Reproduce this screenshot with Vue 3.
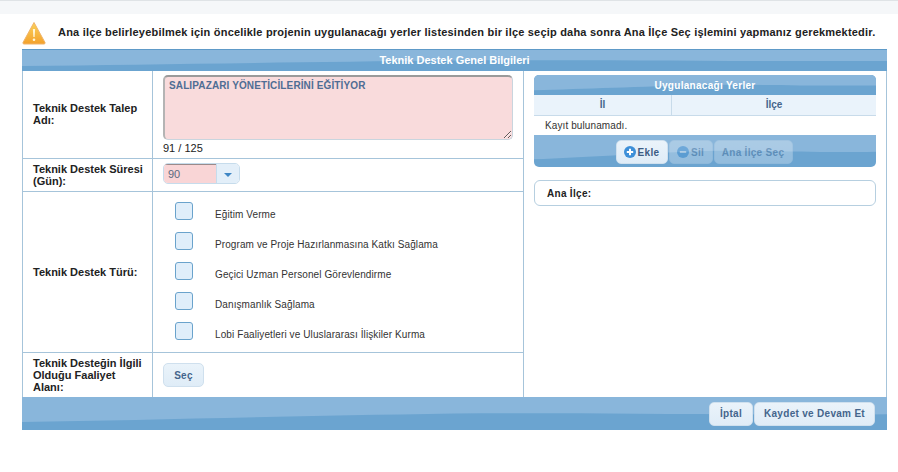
<template>
  <div class="page">
    <div class="top-strip"></div>
    <div class="message">
      <svg class="warn" width="24" height="24" viewBox="0 0 24 24">
        <defs>
          <linearGradient id="warnFill" x1="0" y1="0" x2="0" y2="1">
            <stop offset="0" stop-color="#fbd25a" />
            <stop offset="1" stop-color="#f3a12c" />
          </linearGradient>
        </defs>
        <path d="M12 1.5 L23 21.5 Q23.4 23 22 23 L2 23 Q.6 23 1 21.5 Z" fill="url(#warnFill)" stroke="#f0b46a" stroke-width="1" stroke-linejoin="round" />
        <path d="M10.9 8 L13.1 8 L12.6 16 L11.4 16 Z" fill="#fff6d8" />
        <circle cx="12" cy="18.8" r="1.3" fill="#fff6d8" />
      </svg>
      <span>Ana ilçe belirleyebilmek için öncelikle projenin uygulanacağı yerler listesinden bir ilçe seçip daha sonra Ana İlçe Seç işlemini yapmanız gerekmektedir.</span>
    </div>

    <div class="panel">
      <div class="bar title">Teknik Destek Genel Bilgileri</div>
      <div class="body">
        <div class="left">
          <div class="row row-name">
            <div class="label"><span>Teknik Destek Talep<br>Adı:</span></div>
            <div class="value name-value">
              <textarea class="area" readonly :value="talepAdi"></textarea>
              <div class="count">91 / 125</div>
            </div>
          </div>
          <div class="row row-time">
            <div class="label"><span>Teknik Destek Süresi<br>(Gün):</span></div>
            <div class="value">
              <div class="spinner">
                <span class="spin-input">90</span>
                <span class="spin-btn"><i class="caret"></i></span>
              </div>
            </div>
          </div>
          <div class="row row-type">
            <div class="label">Teknik Destek Türü:</div>
            <div class="value types">
              <div v-for="t in turler" :key="t" class="type">
                <span class="box"></span>
                <span class="type-text">{{ t }}</span>
              </div>
            </div>
          </div>
          <div class="row row-area">
            <div class="label"><span>Teknik Desteğin İlgili<br>Olduğu Faaliyet<br>Alanı:</span></div>
            <div class="value">
              <button class="btn sec">Seç</button>
            </div>
          </div>
        </div>

        <div class="right">
          <div class="places">
            <div class="bar places-title">Uygulanacağı Yerler</div>
            <div class="head">
              <div class="il">İl</div>
              <div class="ilce">İlçe</div>
            </div>
            <div class="empty">Kayıt bulunamadı.</div>
            <div class="bar places-foot">
              <button class="btn ekle">
                <svg width="12" height="12" viewBox="0 0 12 12">
                  <circle cx="6" cy="6" r="6" fill="#3d8fd8" />
                  <path d="M6 2.8v6.4M2.8 6h6.4" stroke="#fff" stroke-width="2" />
                </svg>
                Ekle
              </button>
              <button class="btn off">
                <svg width="12" height="12" viewBox="0 0 12 12">
                  <circle cx="6" cy="6" r="6" fill="#3d8fd8" />
                  <path d="M2.8 6h6.4" stroke="#fff" stroke-width="2" />
                </svg>
                Sil
              </button>
              <button class="btn off wide">Ana İlçe Seç</button>
            </div>
          </div>
          <div class="main-district">Ana İlçe:</div>
        </div>
      </div>
      <div class="bar foot">
        <button class="btn cancel">İptal</button>
        <button class="btn save">Kaydet ve Devam Et</button>
      </div>
    </div>
  </div>
</template>

<script setup>
const talepAdi = 'SALIPAZARI YÖNETİCİLERİNİ EĞİTİYOR'
const turler = [
  'Eğitim Verme',
  'Program ve Proje Hazırlanmasına Katkı Sağlama',
  'Geçici Uzman Personel Görevlendirme',
  'Danışmanlık Sağlama',
  'Lobi Faaliyetleri ve Uluslararası İlişkiler Kurma'
]
</script>

<style>
html, body {
  margin: 0;
  background: #fff;
}
</style>

<style scoped>
.page {
  width: 898px;
  height: 472px;
  overflow: hidden;
  font-family: "Liberation Sans", Arial, sans-serif;
  font-size: 11px;
  color: #222;
}

.top-strip {
  height: 13px;
  background: #f5f7f9;
  border-top: 1px solid #dfe3e6;
}

.message {
  display: flex;
  align-items: center;
  height: 35px;
  padding-left: 22px;
  font-weight: bold;
  letter-spacing: 0.2px;
  color: #222;
  white-space: nowrap;
}

.warn {
  flex-shrink: 0;
  margin: 3px 12px 0 0;
}

.panel {
  margin-left: 22px;
  width: 865px;
  box-sizing: border-box;
  border: 1px solid #a6c4da;
  border-top: 0;
}

/* swoosh of the header bars, light on top and darker under the wave */
.bar {
  background-color: #6ba4d0;
  background-image: url("data:image/svg+xml,%3Csvg xmlns='http://www.w3.org/2000/svg' viewBox='0 0 100 100' preserveAspectRatio='none'%3E%3Cpath d='M0 0H100V52C80 56 65 46 50 50C30 58 15 70 0 76Z' fill='%2389b6db'/%3E%3C/svg%3E");
  background-size: 100% 100%;
}

.title {
  height: 21px;
  margin: 0 -1px;
  box-sizing: content-box;
  border-top: 1px solid #5e9ac8;
  line-height: 21px;
  text-align: center;
  color: #fff;
  font-weight: bold;
}

.body {
  display: flex;
  height: 326px;
}

.left {
  width: 501px;
  box-sizing: border-box;
  border-right: 1px solid #a6c4da;
}

.row {
  display: flex;
  box-sizing: border-box;
  border-bottom: 1px solid #a6c4da;
}

.row-name { height: 88px; }
.row-time { height: 33px; }
.row-type { height: 161px; }
.row-area { height: 44px; border-bottom: 0; }

.label {
  width: 130px;
  box-sizing: border-box;
  flex-shrink: 0;
  display: flex;
  align-items: center;
  padding-left: 10px;
  border-right: 1px solid #a6c4da;
  font-weight: bold;
  line-height: 12px;
  white-space: nowrap;
  color: #222;
}

.row-name .label {
  padding-bottom: 2px;
}

.value {
  flex: 1;
  display: flex;
  align-items: center;
  padding-left: 10px;
}

.name-value {
  flex-direction: column;
  align-items: flex-start;
  padding-top: 4px;
}

.area {
  display: block;
  width: 350px;
  height: 65px;
  box-sizing: border-box;
  margin: 0;
  padding: 3px 4px;
  background: #f9dbdc;
  border: 1px solid #c9d5de;
  border-top: 2px solid #9a9a9a;
  border-left: 2px solid #b4b4b4;
  border-radius: 5px;
  font-family: inherit;
  font-size: 10px;
  font-weight: bold;
  letter-spacing: 0.12px;
  color: #4f6d94;
  outline: 0;
}

.count {
  margin-top: 2px;
  font-size: 11px;
}

.spinner {
  display: flex;
  width: 77px;
  height: 21px;
  margin-bottom: 3px;
  box-sizing: border-box;
  border: 1px solid #c6dcec;
  border-radius: 5px;
  overflow: hidden;
}

.spin-input {
  width: 52px;
  box-sizing: border-box;
  padding-left: 4px;
  line-height: 19px;
  background: #f9d5d6;
  border-top: 1px solid #9a8a8a;
  color: #5c6a80;
}

.spin-btn {
  flex: 1;
  display: flex;
  align-items: center;
  justify-content: center;
  background: #e3eff9;
  border-left: 1px solid #c6dcec;
}

.caret {
  margin-top: 2px;
  border: 4px solid transparent;
  border-top: 4px solid #3f86c4;
  border-bottom: 0;
}

.types {
  flex-direction: column;
  align-items: stretch;
  padding: 10px 0 0 22px;
  gap: 12px;
}

.type {
  display: flex;
  align-items: center;
  height: 18px;
  gap: 22px;
  font-size: 10px;
  letter-spacing: 0.1px;
  color: #333;
}

.type-text {
  padding-top: 6px;
}

.box {
  width: 16px;
  height: 16px;
  border: 1px solid #6aa3cc;
  border-radius: 3px;
  background: #e0eefa;
}

.btn {
  height: 24px;
  box-sizing: border-box;
  padding: 0;
  display: inline-flex;
  align-items: center;
  justify-content: center;
  gap: 2px;
  border: 1px solid #cfe0ee;
  border-radius: 5px;
  background: linear-gradient(#eaf3fa, #dfecf7);
  font-family: inherit;
  font-size: 10px;
  font-weight: bold;
  letter-spacing: 0.3px;
  color: #44658c;
}

.sec {
  width: 41px;
}

.right {
  flex: 1;
  padding: 4px 10px 0;
}

.places {
  border-radius: 5px;
  overflow: hidden;
}

.places-title {
  height: 20px;
  line-height: 21px;
  text-align: center;
  color: #fff;
  font-size: 10px;
  font-weight: bold;
  letter-spacing: 0.3px;
}

.head {
  display: flex;
  height: 20px;
  line-height: 20px;
  text-align: center;
  font-size: 10px;
  font-weight: bold;
  color: #44658c;
  background: #eaf3fb;
  border-bottom: 1px solid #c8dbea;
}

.il {
  width: 137px;
  border-right: 1px solid #c8dbea;
}

.ilce {
  flex: 1;
}

.empty {
  height: 19px;
  line-height: 19px;
  padding-left: 11px;
  font-size: 10px;
  letter-spacing: 0.1px;
  background: #fff;
  color: #333;
}

.places-foot {
  display: flex;
  justify-content: center;
  gap: 1px;
  height: 32px;
  box-sizing: border-box;
  padding: 5px 2px 0 0;
}

.ekle {
  width: 52px;
  color: #3c5c84;
}

.off {
  width: 44px;
  opacity: 0.35;
}

.wide {
  width: 79px;
}

.main-district {
  margin-top: 13px;
  height: 26px;
  box-sizing: border-box;
  padding-left: 12px;
  line-height: 25px;
  border: 1px solid #b6cfe0;
  border-radius: 6px;
  font-size: 10px;
  font-weight: bold;
  letter-spacing: 0.3px;
  color: #222;
}

.foot {
  height: 33px;
  margin: 0 -1px -1px;
  box-sizing: border-box;
  display: flex;
  justify-content: flex-end;
  align-items: center;
  gap: 1px;
  padding: 0 12px 0 0;
}

.cancel {
  width: 44px;
}

.save {
  width: 121px;
}
</style>
